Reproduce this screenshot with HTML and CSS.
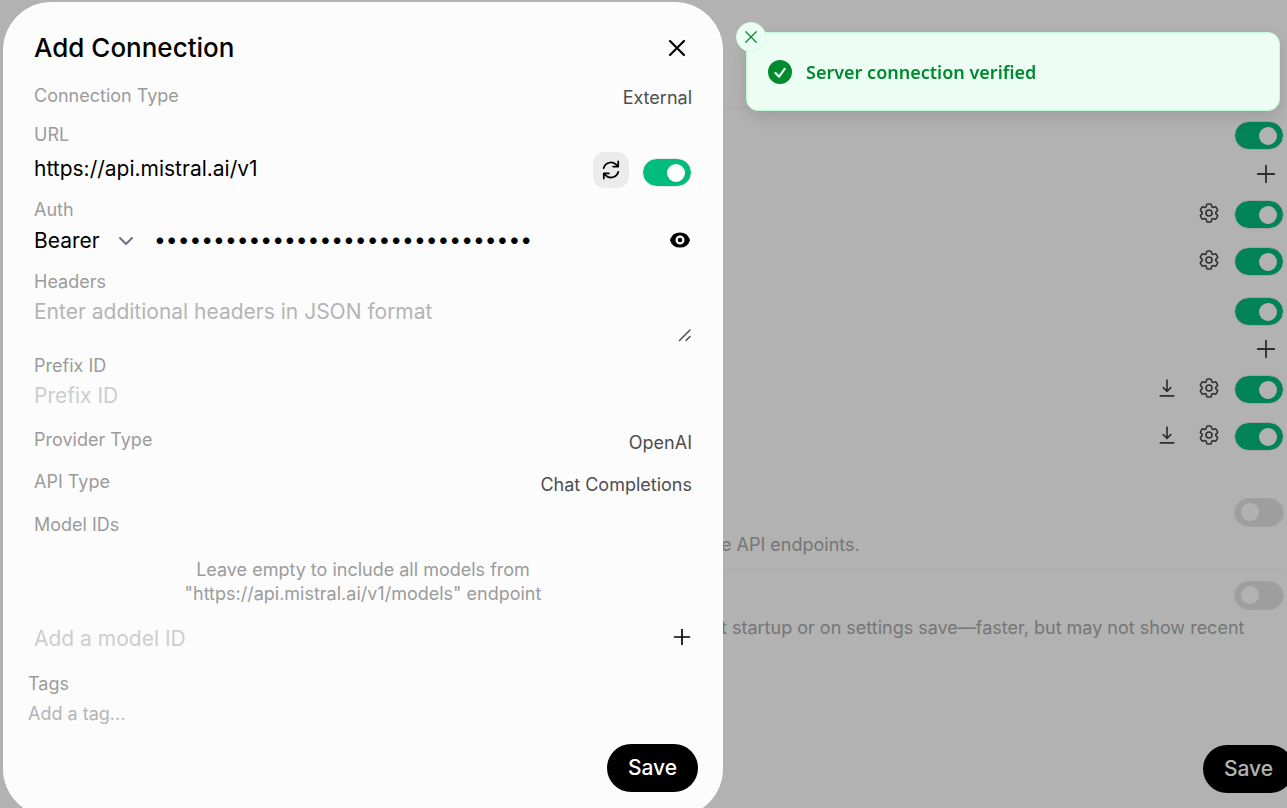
FILE: index.html
```html
<!DOCTYPE html>
<html lang="en">
<head>
<meta charset="utf-8">
<title>Add Connection</title>
<link rel="stylesheet" href="styles.css">
</head>
<body>
<svg class="sprite" aria-hidden="true">
  <symbol id="gear" viewBox="0 0 24 24"><path d="M9.594 3.94c.09-.542.56-.94 1.11-.94h2.593c.55 0 1.02.398 1.11.94l.213 1.281c.063.374.313.686.645.87.074.04.147.083.22.127.325.196.72.257 1.075.124l1.217-.456a1.125 1.125 0 0 1 1.37.49l1.296 2.247a1.125 1.125 0 0 1-.26 1.431l-1.003.827c-.293.241-.438.613-.43.992a7.723 7.723 0 0 1 0 .255c-.008.378.137.75.43.991l1.004.827c.424.35.534.955.26 1.43l-1.298 2.247a1.125 1.125 0 0 1-1.369.491l-1.217-.456c-.355-.133-.75-.072-1.076.124a6.47 6.47 0 0 1-.22.128c-.331.183-.581.495-.644.869l-.213 1.281c-.09.543-.56.94-1.11.94h-2.594c-.55 0-1.019-.398-1.11-.94l-.213-1.281c-.062-.374-.312-.686-.644-.87a6.52 6.52 0 0 1-.22-.127c-.325-.196-.72-.257-1.076-.124l-1.217.456a1.125 1.125 0 0 1-1.369-.49l-1.297-2.247a1.125 1.125 0 0 1 .26-1.431l1.004-.827c.292-.24.437-.613.43-.991a6.932 6.932 0 0 1 0-.255c.007-.38-.138-.751-.43-.992l-1.004-.827a1.125 1.125 0 0 1-.26-1.43l1.297-2.247a1.125 1.125 0 0 1 1.37-.491l1.216.456c.356.133.751.072 1.076-.124.072-.044.146-.086.22-.128.332-.183.582-.495.644-.869l.214-1.28Z"/><path d="M15 12a3 3 0 1 1-6 0 3 3 0 0 1 6 0Z"/></symbol>
  <symbol id="download" viewBox="0 0 24 24"><path d="M12 2.500v13M7.500 11.500l4.500 4.500 4.500-4.500M4 21.500h16"/></symbol>
  <symbol id="plus" viewBox="0 0 24 24"><path d="M12 3v18M3 12h18"/></symbol>
  <symbol id="cross" viewBox="0 0 24 24"><path d="M5 5l14 14M19 5L5 19"/></symbol>
</svg>

<main class="page">
  <div class="row divided"><input class="switch" type="checkbox" checked aria-label="OpenAI API"></div>
  <div class="row manage"><button class="icon" aria-label="Add OpenAI connection"><svg class="line i22"><use href="#plus"/></svg></button></div>
  <div class="row"><button class="icon" aria-label="Configure"><svg class="line i24"><use href="#gear"/></svg></button><input class="switch" type="checkbox" checked aria-label="Enable connection"></div>
  <div class="row"><button class="icon" aria-label="Configure"><svg class="line i24"><use href="#gear"/></svg></button><input class="switch" type="checkbox" checked aria-label="Enable connection"></div>
  <div class="row group"><input class="switch" type="checkbox" checked aria-label="Ollama API"></div>
  <div class="row manage"><button class="icon" aria-label="Add Ollama connection"><svg class="line i22"><use href="#plus"/></svg></button></div>
  <div class="row"><button class="icon" aria-label="Download"><svg class="line i20"><use href="#download"/></svg></button><button class="icon" aria-label="Configure"><svg class="line i24"><use href="#gear"/></svg></button><input class="switch" type="checkbox" checked aria-label="Enable connection"></div>
  <div class="row"><button class="icon" aria-label="Download"><svg class="line i20"><use href="#download"/></svg></button><button class="icon" aria-label="Configure"><svg class="line i24"><use href="#gear"/></svg></button><input class="switch" type="checkbox" checked aria-label="Enable connection"></div>
  <section class="option first">
    <div class="row short"><input class="switch" type="checkbox" aria-label="Direct connections"></div>
    <p class="note">e API endpoints.</p>
  </section>
  <section class="option">
    <div class="row short"><input class="switch" type="checkbox" aria-label="Cache base model list"></div>
    <p class="note">t startup or on settings save—faster, but may not show recent</p>
  </section>
  <button class="save page-save">Save</button>
</main>

<div class="backdrop">
  <form class="modal" role="dialog" aria-labelledby="title">
    <header class="head">
      <h1 class="title" id="title">Add Connection</h1>
      <button type="button" class="icon" aria-label="Close"><svg class="line bold i24"><use href="#cross"/></svg></button>
    </header>
    <div class="fields">
      <div class="pair"><span class="label">Connection Type</span><button type="button" class="value">External</button></div>
      <div class="field url">
        <label class="label" for="url">URL</label>
        <div class="line-row url-row">
          <input class="text" id="url" type="text" value="https://api.mistral.ai/v1">
          <button type="button" class="refresh" aria-label="Verify connection"><svg class="fill i24" viewBox="0 0 20 20"><path fill-rule="evenodd" d="M15.312 11.424a5.500 5.500 0 0 1-9.201 2.466l-.312-.311h2.433a.75.75 0 0 0 0-1.500H3.989a.75.75 0 0 0-.75.75v4.242a.75.75 0 0 0 1.500 0v-2.430l.310.310a7 7 0 0 0 11.712-3.138.75.75 0 0 0-1.449-.390Zm1.230-3.723a.75.75 0 0 0 .219-.530V2.929a.75.75 0 0 0-1.500 0V5.360l-.310-.310A7 7 0 0 0 3.239 8.188a.75.75 0 1 0 1.448.389A5.500 5.500 0 0 1 13.890 6.110l.311.310h-2.432a.75.75 0 0 0 0 1.500h4.243a.75.75 0 0 0 .530-.219Z"/></svg></button>
          <input class="switch" type="checkbox" checked aria-label="Enabled">
        </div>
      </div>
      <div class="field auth">
        <label class="label" for="auth">Auth</label>
        <div class="line-row">
          <div class="select-wrap">
            <select class="select" id="auth"><option>Bearer</option><option>None</option></select>
            <svg class="line chevron" viewBox="0 0 20 20"><path d="M4 7l6 6 6-6"/></svg>
          </div>
          <input class="text secret" type="password" aria-label="API key" value="abcdefghijklmnopqrstuvwxyz012345">
          <button type="button" class="icon" aria-label="Show key"><svg class="fill i24" viewBox="0 0 16 16"><path d="M8 9.500a1.500 1.500 0 1 0 0-3 1.500 1.500 0 0 0 0 3Z"/><path fill-rule="evenodd" d="M1.380 8.280a.87.87 0 0 1 0-.566 7.003 7.003 0 0 1 13.238.006.87.87 0 0 1 0 .566A7.003 7.003 0 0 1 1.379 8.280ZM11 8a3 3 0 1 1-6 0 3 3 0 0 1 6 0Z"/></svg></button>
        </div>
      </div>
      <div class="field headers">
        <label class="label" for="headers">Headers</label>
        <div class="area-wrap">
          <textarea class="text area" id="headers" placeholder="Enter additional headers in JSON format"></textarea>
          <svg class="line grip" viewBox="0 0 14 14" aria-hidden="true"><path d="M1.500 12.500l10.500-10.500M8 12.500l4-4"/></svg>
        </div>
      </div>
      <div class="field prefix">
        <label class="label" for="prefix">Prefix ID</label>
        <input class="text" id="prefix" type="text" placeholder="Prefix ID">
      </div>
      <div class="pair provider"><span class="label">Provider Type</span><button type="button" class="value">OpenAI</button></div>
      <div class="pair api"><span class="label">API Type</span><button type="button" class="value">Chat Completions</button></div>
      <label class="label models" for="model">Model IDs</label>
      <p class="hint">Leave empty to include all models from "https://api.mistral.ai/v1/models" endpoint</p>
      <div class="line-row model-row">
        <input class="text" id="model" type="text" placeholder="Add a model ID">
        <button type="button" class="icon" aria-label="Add model"><svg class="line i20"><use href="#plus"/></svg></button>
      </div>
    </div>
    <div class="tags">
      <label class="label" for="tag">Tags</label>
      <input class="text small" id="tag" type="text" placeholder="Add a tag...">
    </div>
    <div class="actions"><button type="button" class="save">Save</button></div>
  </form>
</div>

<div class="toast" role="status">
  <button class="dismiss" aria-label="Dismiss"><svg class="line i18"><use href="#cross"/></svg></button>
  <svg class="fill check" viewBox="0 0 20 20"><path fill-rule="evenodd" d="M10 20a10 10 0 1 0 0-20 10 10 0 0 0 0 20Zm4.800-12.250a.95.95 0 0 0-1.500-1.100l-4.200 5.750-2.200-2.200a.95.95 0 0 0-1.350 1.350l3 3a.95.95 0 0 0 1.450-.120Z"/></svg>
  <span>Server connection verified</span>
</div>
</body>
</html>
```
FILE: styles.css
```css
* { box-sizing: border-box; }
body {
  margin: 0;
  height: 100vh;
  overflow: hidden;
  background: #fff;
  font-family: Inter, "Liberation Sans", sans-serif;
  font-size: 18px;
  line-height: 24px;
  color: #000;
}
button, input, textarea, select { font: inherit; color: inherit; }
button { border: 0; padding: 0; background: none; cursor: pointer; }
p, h1 { margin: 0; }
.sprite { position: absolute; width: 0; height: 0; }
svg { display: block; flex: none; }
.line { fill: none; stroke: currentColor; stroke-width: 2; stroke-linecap: round; stroke-linejoin: round; }
.bold { stroke-width: 2.2; }
.fill { fill: currentColor; }
.i18 { width: 18px; height: 18px; }
.i20 { width: 20px; height: 20px; }
.i22 { width: 22px; height: 22px; }
.i24 { width: 24px; height: 24px; }
.icon { display: flex; flex: none; align-items: center; justify-content: center; }

.switch {
  appearance: none;
  display: flex;
  flex: none;
  align-items: center;
  justify-content: flex-end;
  width: 48px;
  height: 27px;
  margin: 0;
  padding: 0 6px;
  border-radius: 14px;
  background: #00bc7d;
  outline: 1px solid #e8e8e8;
}
.switch::before { content: ""; width: 18px; height: 18px; border-radius: 50%; background: #fff; }
.switch:not(:checked) { justify-content: flex-start; background: #e3e3e3; outline-color: #e9e9e9; }

.page {
  display: flex;
  flex-direction: column;
  height: 100vh;
  padding: 107px 4px 15px 721px;
  color: #444;
}
.row { display: flex; flex: none; align-items: center; justify-content: flex-end; gap: 14px; height: 47px; }
.row .icon { padding-bottom: 3px; }
.row .i20 { margin-right: 6px; }
.row .i24 { stroke-width: 1.6; }
.divided { height: 52px; padding-top: 4px; border-top: 1px solid #f4f4f4; }
.manage { height: 30px; margin-bottom: 2px; padding-right: 6px; }
.row.manage .icon { padding-bottom: 0; }
.group { padding-top: 2px; margin-top: 2px; }
.short { height: 34px; }
.option { padding: 8px 0 12px; }
.option.first { margin-top: 27px; border-bottom: 1px solid #f4f4f4; }
.note { margin-top: 4px; color: #aaa; white-space: nowrap; }
.save {
  flex: none;
  width: 91px;
  height: 48px;
  border-radius: 24px;
  background: #000;
  color: #fff;
  font-size: 21px;
  font-weight: 500;
}
.page-save { align-self: flex-end; margin-top: auto; margin-right: -11px; }

.backdrop { position: fixed; inset: 0; padding: 2px 3px; background: rgba(0, 0, 0, 0.3); }
.modal {
  width: 100%;
  max-width: 720px;
  padding: 27px 24px 24px;
  border: 1px solid #fff;
  border-radius: 48px;
  background: #fcfcfc;
}
.head { display: flex; align-items: center; justify-content: space-between; height: 36px; padding: 0 9px 0 6px; }
.title { font-size: 26px; line-height: 36px; font-weight: 500; }
.fields { display: flex; flex-direction: column; padding: 18px 6px 0; }
.label { color: #9b9b9b; }
.pair { display: flex; justify-content: space-between; height: 28px; }
.value { color: #4e4e4e; }
.field { display: flex; flex-direction: column; gap: 4px; }
.line-row { display: flex; align-items: center; }
.text {
  flex: 1;
  min-width: 0;
  width: 100%;
  height: 30px;
  padding: 0;
  border: 0;
  outline: 0;
  background: transparent;
  font-size: 21px;
}
.text::placeholder { color: #cdcdcd; opacity: 1; }
.url { margin-top: 11px; }
.url-row { align-items: flex-start; gap: 14px; height: 36px; padding: 1px 1px 0 0; }
.url-row .text { height: 33px; }
.url-row .switch { margin-top: 7px; }
.refresh { display: grid; place-items: center; flex: none; width: 36px; height: 36px; border-radius: 12px; background: #ebebeb; }
.auth { margin-top: 11px; }
.auth .icon { padding-bottom: 2px; }
.select-wrap { display: grid; align-items: center; width: 102px; margin-right: 18px; }
.select { grid-area: 1 / 1; width: 100%; height: 30px; padding: 0; border: 0; appearance: none; background: transparent; font-size: 21px; }
.secret { padding-bottom: 3px; }
.chevron { grid-area: 1 / 1; justify-self: end; width: 20px; height: 20px; stroke: #6b7280; pointer-events: none; }
.headers { margin-top: 14px; }
.area-wrap { display: grid; }
.area { grid-area: 1 / 1; height: 46px; line-height: 28px; resize: none; }
.area::placeholder { color: #b4b4b4; }
.grip { grid-area: 1 / 1; place-self: end; width: 14px; height: 14px; margin-bottom: 2px; stroke: #444; stroke-width: 1.4; pointer-events: none; }
.prefix { gap: 2px; margin-top: 10px; }
.prefix .text { flex: none; }
.provider { margin-top: 18px; }
.api { margin-top: 14px; }
.provider .value, .api .value { padding-top: 2px; }
.models { margin-top: 15px; }
.hint { align-self: center; max-width: 400px; margin: 21px 0 17px; color: #9b9b9b; text-align: center; }
.model-row .icon { padding-bottom: 3px; }
.tags { display: flex; flex-direction: column; gap: 6px; margin-top: 19px; }
.text.small { flex: none; height: 24px; font-size: 18px; }
.small::placeholder { color: #b4b4b4; }
.actions { display: flex; justify-content: flex-end; margin-top: 18px; }

.toast {
  position: fixed;
  top: 32px;
  right: 7px;
  display: flex;
  align-items: center;
  gap: 14px;
  width: 534px;
  max-width: calc(100% - 14px);
  min-height: 79px;
  padding: 20px 21px;
  border: 1px solid #bffcd9;
  border-radius: 12px;
  background: #ecfdf3;
  color: #008a2e;
  box-shadow: 0 6px 18px rgba(0, 0, 0, 0.13);
  font-family: "Noto Sans", "Open Sans", sans-serif;
  font-size: 18px;
  font-weight: 600;
}
.check { width: 24px; height: 24px; }
.dismiss {
  position: absolute;
  top: -11px;
  left: -11px;
  display: grid;
  place-items: center;
  width: 30px;
  height: 30px;
  border: 1px solid #d3fde5;
  border-radius: 50%;
  background: #ecfdf3;
}
.dismiss .line { stroke-width: 1.6; }
```
